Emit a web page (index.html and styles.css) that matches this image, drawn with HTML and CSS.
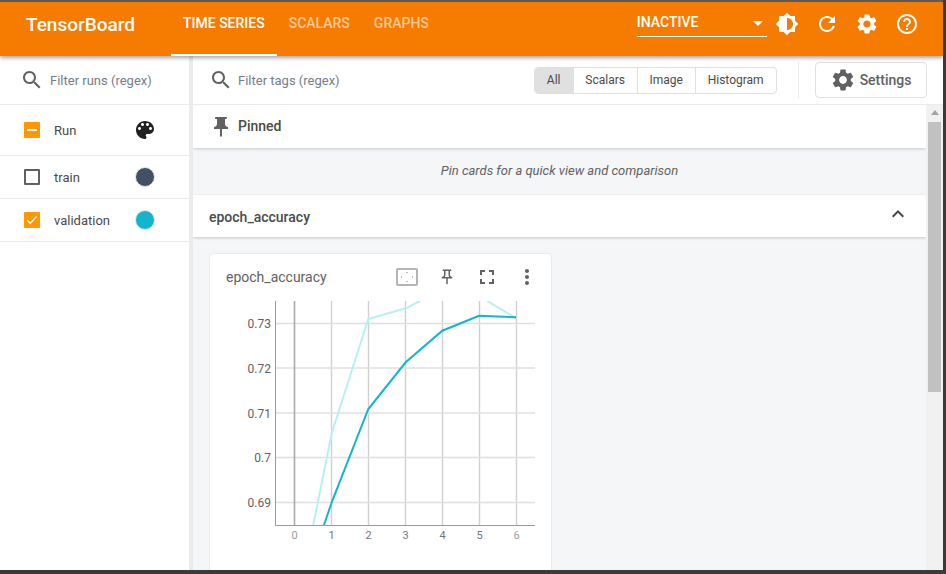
FILE: index.html
```html
<!DOCTYPE html>
<html lang="en">
<head>
<meta charset="UTF-8">
<meta name="viewport" content="width=device-width, initial-scale=1.0">
<title>TensorBoard</title>
<link rel="stylesheet" href="styles.css">
</head>
<body>

<div class="app">
    <header class="topbar">
        <div class="brand">TensorBoard</div>
        <nav class="tabs">
            <a class="tab active">TIME SERIES</a>
            <a class="tab">SCALARS</a>
            <a class="tab">GRAPHS</a>
        </nav>
        <div class="plugin-select">
            <span>INACTIVE</span>
            <i class="caret"></i>
        </div>
        <div class="top-icons">
            <svg viewBox="0 0 24 24"><path d="M20 15.31L23.31 12 20 8.69V4h-4.69L12 .69 8.69 4H4v4.69L.69 12 4 15.31V20h4.69L12 23.31 15.31 20H20v-4.69zM12 18V6c3.31 0 6 2.69 6 6s-2.69 6-6 6z"/></svg>
            <svg viewBox="0 0 24 24"><path d="M17.65 6.35C16.2 4.9 14.21 4 12 4c-4.42 0-7.99 3.58-7.99 8s3.57 8 7.99 8c3.73 0 6.84-2.55 7.73-6h-2.08c-.82 2.33-3.04 4-5.65 4-3.31 0-6-2.69-6-6s2.69-6 6-6c1.66 0 3.14.69 4.22 1.78L13 11h7V4l-2.35 2.35z"/></svg>
            <svg viewBox="0 0 24 24"><path d="M19.14 12.94c.04-.3.06-.61.06-.94 0-.32-.02-.64-.07-.94l2.03-1.58c.18-.14.23-.41.12-.61l-1.92-3.32c-.12-.22-.37-.29-.59-.22l-2.39.96c-.5-.38-1.03-.7-1.62-.94l-.36-2.54c-.04-.24-.24-.41-.48-.41h-3.84c-.24 0-.43.17-.47.41l-.36 2.54c-.59.24-1.13.57-1.62.94l-2.39-.96c-.22-.08-.47 0-.59.22L2.74 8.87c-.12.21-.08.47.12.61l2.03 1.58c-.05.3-.09.63-.09.94s.02.64.07.94l-2.03 1.58c-.18.14-.23.41-.12.61l1.92 3.32c.12.22.37.29.59.22l2.39-.96c.5.38 1.03.7 1.62.94l.36 2.54c.05.24.24.41.48.41h3.84c.24 0 .44-.17.47-.41l.36-2.54c.59-.24 1.13-.56 1.62-.94l2.39.96c.22.08.47 0 .59-.22l1.92-3.32c.12-.22.07-.47-.12-.61l-2.01-1.58zM12 15.6c-1.98 0-3.6-1.62-3.6-3.6s1.62-3.6 3.6-3.6 3.6 1.62 3.6 3.6-1.62 3.6-3.6 3.6z"/></svg>
            <svg viewBox="0 0 24 24"><path d="M11 18h2v-2h-2v2zm1-16C6.48 2 2 6.48 2 12s4.48 10 10 10 10-4.48 10-10S17.52 2 12 2zm0 18c-4.41 0-8-3.59-8-8s3.59-8 8-8 8 3.59 8 8-3.59 8-8 8zm0-14c-2.21 0-4 1.79-4 4h2c0-1.1.9-2 2-2s2 .9 2 2c0 2-3 1.75-3 5h2c0-2.25 3-2.5 3-5 0-2.21-1.79-4-4-4z"/></svg>
        </div>
    </header>

    <div class="workspace">
        <aside class="sidebar">
            <div class="filter-row">
                <svg class="search-icon" viewBox="0 0 24 24"><path d="M15.5 14h-.79l-.28-.27C15.41 12.59 16 11.11 16 9.5 16 5.91 13.09 3 9.5 3S3 5.91 3 9.5 5.91 16 9.5 16c1.61 0 3.09-.59 4.23-1.57l.27.28v.79l5 4.99L20.49 19l-4.99-5zm-6 0C7.01 14 5 11.99 5 9.5S7.01 5 9.5 5 14 7.01 14 9.5 11.99 14 9.5 14z"/></svg>
                <span class="placeholder">Filter runs (regex)</span>
            </div>
            <div class="run-row run-head">
                <span class="check checked"><i class="dash"></i></span>
                <span class="run-name">Run</span>
                <svg class="palette" viewBox="0 0 24 24"><path d="M12 3c-4.97 0-9 4.03-9 9s4.03 9 9 9c.83 0 1.5-.67 1.5-1.5 0-.39-.15-.74-.39-1.01-.23-.26-.38-.61-.38-.99 0-.83.67-1.5 1.5-1.5H16c2.76 0 5-2.24 5-5 0-4.42-4.03-8-9-8zm-5.5 9c-.83 0-1.5-.67-1.5-1.5S5.67 9 6.5 9 8 9.67 8 10.5 7.33 12 6.5 12zm3-4C8.67 8 8 7.33 8 6.5S8.67 5 9.5 5s1.5.67 1.5 1.5S10.33 8 9.5 8zm5 0c-.83 0-1.5-.67-1.5-1.5S13.67 5 14.5 5s1.5.67 1.5 1.5S15.33 8 14.5 8zm3 4c-.83 0-1.5-.67-1.5-1.5S16.67 9 17.5 9s1.5.67 1.5 1.5-.67 1.5-1.5 1.5z"/></svg>
            </div>
            <div class="run-row">
                <span class="check"></span>
                <span class="run-name">train</span>
                <span class="swatch swatch-train"></span>
            </div>
            <div class="run-row">
                <span class="check checked">
                    <svg viewBox="0 0 16 16"><path d="M3.2 8.2l3.2 3 6.2-6.6" fill="none" stroke="#fff" stroke-width="1.4"/></svg>
                </span>
                <span class="run-name">validation</span>
                <span class="swatch swatch-validation"></span>
            </div>
        </aside>

        <main class="main">
            <div class="toolbar">
                <svg class="search-icon" viewBox="0 0 24 24"><path d="M15.5 14h-.79l-.28-.27C15.41 12.59 16 11.11 16 9.5 16 5.91 13.09 3 9.5 3S3 5.91 3 9.5 5.91 16 9.5 16c1.61 0 3.09-.59 4.23-1.57l.27.28v.79l5 4.99L20.49 19l-4.99-5zm-6 0C7.01 14 5 11.99 5 9.5S7.01 5 9.5 5 14 7.01 14 9.5 11.99 14 9.5 14z"/></svg>
                <span class="placeholder">Filter tags (regex)</span>
                <div class="type-filter">
                    <span class="type-btn selected">All</span>
                    <span class="type-btn">Scalars</span>
                    <span class="type-btn">Image</span>
                    <span class="type-btn">Histogram</span>
                </div>
                <div class="toolbar-divider"></div>
                <div class="settings-btn">
                    <svg viewBox="0 0 24 24"><path d="M19.14 12.94c.04-.3.06-.61.06-.94 0-.32-.02-.64-.07-.94l2.03-1.58c.18-.14.23-.41.12-.61l-1.92-3.32c-.12-.22-.37-.29-.59-.22l-2.39.96c-.5-.38-1.03-.7-1.62-.94l-.36-2.54c-.04-.24-.24-.41-.48-.41h-3.84c-.24 0-.43.17-.47.41l-.36 2.54c-.59.24-1.13.57-1.62.94l-2.39-.96c-.22-.08-.47 0-.59.22L2.74 8.87c-.12.21-.08.47.12.61l2.03 1.58c-.05.3-.09.63-.09.94s.02.64.07.94l-2.03 1.58c-.18.14-.23.41-.12.61l1.92 3.32c.12.22.37.29.59.22l2.39-.96c.5.38 1.03.7 1.62.94l.36 2.54c.05.24.24.41.48.41h3.84c.24 0 .44-.17.47-.41l.36-2.54c.59-.24 1.13-.56 1.62-.94l2.39.96c.22.08.47 0 .59-.22l1.92-3.32c.12-.22.07-.47-.12-.61l-2.01-1.58zM12 15.6c-1.98 0-3.6-1.62-3.6-3.6s1.62-3.6 3.6-3.6 3.6 1.62 3.6 3.6-1.62 3.6-3.6 3.6z"/></svg>
                    <span>Settings</span>
                </div>
            </div>

            <div class="main-body">
                <div class="content">
                    <div class="group-head pinned-head">
                        <svg class="pin-solid" viewBox="0 0 24 24"><path d="M16 9V4h1c.55 0 1-.45 1-1s-.45-1-1-1H7c-.55 0-1 .45-1 1s.45 1 1 1h1v5c0 1.66-1.34 3-3 3v2h5.97v7l1 1 1-1v-7H19v-2c-1.66 0-3-1.34-3-3z"/></svg>
                        <span>Pinned</span>
                    </div>
                    <div class="pinned-empty">Pin cards for a quick view and comparison</div>
                    <div class="group-head tag-head">
                        <span>epoch_accuracy</span>
                        <svg class="chevron" viewBox="0 0 24 24"><path d="M12 8l-6 6 1.41 1.41L12 10.83l4.59 4.58L18 14z"/></svg>
                    </div>
                    <div class="card-area">
                        <section class="card">
                            <div class="card-head">
                                <span class="card-title">epoch_accuracy</span>
                                <svg class="fit-icon" viewBox="0 0 22 18">
                                    <rect x="1" y="1" width="20" height="16" rx="1" fill="none" stroke="#b4b4b4" stroke-width="2"/>
                                    <path d="M10 5l1-1 1 1M10 13l1 1 1-1M6 8l-1 1 1 1M16 8l1 1-1 1" fill="none" stroke="#b4b4b4" stroke-width=".9"/>
                                </svg>
                                <svg class="card-icon pin-icon" viewBox="0 0 24 24"><path d="M14 4v5c0 1.12.37 2.16 1 3H9c.65-.86 1-1.9 1-3V4h4m3-2H7c-.55 0-1 .45-1 1s.45 1 1 1h1v5c0 1.66-1.34 3-3 3v2h5.97v7l1 1 1-1v-7H19v-2c-1.66 0-3-1.34-3-3V4h1c.55 0 1-.45 1-1s-.45-1-1-1z"/></svg>
                                <svg class="card-icon" viewBox="0 0 24 24"><path d="M7 14H5v5h5v-2H7v-3zm-2-4h2V7h3V5H5v5zm12 7h-3v2h5v-5h-2v3zM14 5v2h3v3h2V5h-5z"/></svg>
                                <svg class="card-icon" viewBox="0 0 24 24"><path d="M12 8c1.1 0 2-.9 2-2s-.9-2-2-2-2 .9-2 2 .9 2 2 2zm0 2c-1.1 0-2 .9-2 2s.9 2 2 2 2-.9 2-2-.9-2-2-2zm0 6c-1.1 0-2 .9-2 2s.9 2 2 2 2-.9 2-2-.9-2-2-2z"/></svg>
                            </div>
                            <svg class="chart" viewBox="210 301 340 260">
                                <g class="grid-x">
                                    <line x1="331.5" y1="301" x2="331.5" y2="525"/>
                                    <line x1="368.5" y1="301" x2="368.5" y2="525"/>
                                    <line x1="405.5" y1="301" x2="405.5" y2="525"/>
                                    <line x1="442.5" y1="301" x2="442.5" y2="525"/>
                                    <line x1="479.5" y1="301" x2="479.5" y2="525"/>
                                    <line x1="516.5" y1="301" x2="516.5" y2="525"/>
                                </g>
                                <g class="grid-y">
                                    <line x1="275" y1="323.5" x2="535" y2="323.5"/>
                                    <line x1="275" y1="368" x2="535" y2="368"/>
                                    <line x1="275" y1="413" x2="535" y2="413"/>
                                    <line x1="275" y1="457.5" x2="535" y2="457.5"/>
                                    <line x1="275" y1="502.5" x2="535" y2="502.5"/>
                                </g>
                                <line class="zero-line" x1="294.5" y1="301" x2="294.5" y2="525"/>
                                <path class="axis-line" d="M275.5 301V525.5H535"/>
                                <polyline class="series-raw" points="313.3,525 331.7,433.3 368.3,319 405.7,308.3 420,301"/>
                                <polyline class="series-raw" points="487.3,301 516,318.3"/>
                                <polyline class="series-smooth" points="324,525 331.7,502.3 368.3,409 405.7,362.3 442.3,330.7 479,315.7 516,317.3"/>
                                <g class="y-labels">
                                    <text x="271" y="327.5">0.73</text>
                                    <text x="271" y="372.5">0.72</text>
                                    <text x="271" y="417.5">0.71</text>
                                    <text x="271" y="462">0.7</text>
                                    <text x="271" y="506.5">0.69</text>
                                </g>
                                <g class="x-labels">
                                    <text class="faint" x="294.5" y="539">0</text>
                                    <text x="331.5" y="539">1</text>
                                    <text x="368.5" y="539">2</text>
                                    <text x="405.5" y="539">3</text>
                                    <text x="442.5" y="539">4</text>
                                    <text x="479.5" y="539">5</text>
                                    <text class="faint" x="516.5" y="539">6</text>
                                </g>
                            </svg>
                        </section>
                    </div>
                </div>
                <div class="scrollbar">
                    <i class="scroll-up"></i>
                    <div class="scroll-thumb"></div>
                </div>
            </div>
        </main>
    </div>
</div>

</body>
</html>
```

FILE: styles.css
```css
* {
    box-sizing: border-box;
}
html, body {
    margin: 0;
    padding: 0;
    height: 100%;
    overflow: hidden;
}
body {
    font-family: Roboto, "Liberation Sans", sans-serif;
    font-size: 14px;
    color: #4a4a4a;
    background-color: #3a3a3a;
}
.app {
    display: flex;
    flex-direction: column;
    width: 943px;
    height: 570px;
    border-top: 2px solid #5a5a5a;
    background-color: #fff;
    overflow: hidden;
}

/* top bar */
.topbar {
    display: flex;
    flex: none;
    height: 54px;
    color: #fff;
    background-color: #f57c00;
    position: relative;
    z-index: 2;
    box-shadow: 0 2px 4px rgba(0, 0, 0, 0.35);
}
.brand {
    width: 171px;
    padding: 11px 0 0 26px;
    font-size: 19px;
    font-weight: 500;
    line-height: 23px;
}
.tabs {
    display: flex;
}
.tab {
    height: 54px;
    padding: 14px 12px 0;
    font-weight: 500;
    line-height: 15px;
    color: rgba(255, 255, 255, 0.6);
}
.tab.active {
    color: #fff;
    border-bottom: 2px solid #fff;
}
.plugin-select {
    display: flex;
    justify-content: space-between;
    width: 130px;
    height: 35px;
    margin-left: 196px;
    padding-top: 13px;
    font-weight: 500;
    line-height: 15px;
    border-bottom: 1px solid #fff;
}
.caret {
    width: 0;
    height: 0;
    margin: 6px 4px 0 0;
    border-left: 5px solid transparent;
    border-right: 5px solid transparent;
    border-top: 5px solid #fff;
}
.top-icons {
    display: flex;
    gap: 16px;
    margin-left: 8px;
    padding-top: 10px;
}
.top-icons svg {
    width: 24px;
    height: 24px;
    fill: #fff;
}

/* runs sidebar */
.workspace {
    display: flex;
    flex: 1;
    min-height: 0;
}
.sidebar {
    flex: none;
    width: 193px;
    border-right: 4px solid #ebebeb;
}
.filter-row {
    display: flex;
    align-items: center;
    height: 49px;
    padding-left: 20px;
    border-bottom: 1px solid #ebebeb;
}
.search-icon {
    flex: none;
    width: 24px;
    height: 24px;
    fill: #616161;
}
.placeholder {
    margin-left: 6px;
    font-size: 13px;
    color: #757d88;
}
.run-row {
    display: flex;
    align-items: center;
    height: 43px;
    padding-left: 24px;
    border-bottom: 1px solid #ebebeb;
}
.run-head {
    height: 51px;
}
.check {
    display: flex;
    align-items: center;
    justify-content: center;
    flex: none;
    width: 16px;
    height: 16px;
    border: 2px solid #616161;
    border-radius: 1px;
}
.check.checked {
    border: none;
    background-color: #ff9800;
}
.check svg {
    width: 16px;
    height: 16px;
}
.dash {
    width: 10px;
    height: 2px;
    background-color: #fff;
}
.run-name {
    width: 82px;
    margin-left: 14px;
    font-size: 13px;
}
.palette {
    width: 24px;
    height: 24px;
    margin-left: -3px;
    fill: #212121;
}
.swatch {
    width: 20px;
    height: 20px;
    margin-left: -1px;
    border-radius: 50%;
    border: 1px solid #e8e8e8;
}
.swatch-train {
    background-color: #425066;
}
.swatch-validation {
    background-color: #12b5cb;
}

/* main column */
.main {
    display: flex;
    flex-direction: column;
    flex: 1;
    min-width: 0;
}
.toolbar {
    display: flex;
    align-items: center;
    flex: none;
    height: 49px;
    padding-left: 16px;
    border-bottom: 1px solid #ebebeb;
}
.toolbar .placeholder {
    margin-left: 5px;
}
.type-filter {
    display: flex;
    height: 27px;
    margin-left: 194px;
    border: 1px solid #e0e0e0;
    border-radius: 4px;
    overflow: hidden;
    font-size: 12px;
}
.type-btn {
    display: flex;
    align-items: center;
    justify-content: center;
    width: 64px;
    border-left: 1px solid #e0e0e0;
}
.type-btn:nth-child(1) {
    width: 38px;
    border-left: none;
}
.type-btn:nth-child(3) {
    width: 58px;
}
.type-btn:nth-child(4) {
    width: 81px;
}
.type-btn.selected {
    background-color: #e0e0e0;
}
.toolbar-divider {
    width: 1px;
    height: 36px;
    margin-left: 21px;
    background-color: #ebebeb;
}
.settings-btn {
    display: flex;
    align-items: center;
    gap: 4px;
    width: 112px;
    height: 36px;
    margin-left: 16px;
    padding-left: 14px;
    font-size: 14px;
    font-weight: 500;
    color: #616161;
    border: 1px solid #e0e0e0;
    border-radius: 4px;
}
.settings-btn svg {
    width: 26px;
    height: 26px;
    fill: #616161;
}
.main-body {
    display: flex;
    flex: 1;
    min-height: 0;
}
.content {
    flex: 1;
    min-width: 0;
    overflow: hidden;
    background-color: #f5f6f8;
}
.group-head {
    display: flex;
    align-items: center;
    position: relative;
    height: 43px;
    font-weight: 500;
    background-color: #fff;
    box-shadow: 0 1px 3px rgba(0, 0, 0, 0.2);
}
.pinned-head {
    padding: 0 0 2px 16px;
}
.pin-solid {
    width: 24px;
    height: 24px;
    margin: 2px 5px 0 0;
    fill: #616161;
}
.pinned-empty {
    height: 47px;
    padding-top: 15px;
    font-size: 13px;
    font-style: italic;
    line-height: 15px;
    text-align: center;
    color: #616161;
}
.tag-head {
    justify-content: space-between;
    height: 42px;
    padding: 2px 16px 0;
}
.chevron {
    width: 24px;
    height: 24px;
    margin-top: -7px;
    fill: #424242;
}
.card-area {
    padding: 16px;
}
.card {
    width: 343px;
    height: 360px;
    background-color: #fff;
    border: 1px solid #ebebeb;
    border-radius: 4px;
}
.card-head {
    display: flex;
    align-items: center;
    height: 47px;
    padding: 0 12px 2px 16px;
}
.card-title {
    flex: 1;
    font-size: 14px;
    color: #616161;
}
.fit-icon {
    width: 22px;
    height: 18px;
    margin-right: 20px;
}
.card-icon {
    width: 24px;
    height: 24px;
    margin-right: 16px;
    fill: #616161;
}
.pin-icon {
    width: 18px;
    height: 18px;
    margin-right: 19px;
}
.card-icon:last-child {
    margin-right: 0;
}
.chart {
    display: block;
    width: 340px;
    height: 260px;
}
.grid-x line {
    stroke: #d0d0d0;
    stroke-width: 1.4;
}
.grid-y line {
    stroke: #e0e0e0;
    stroke-width: 1.5;
}
.zero-line {
    stroke: #aaa;
    stroke-width: 1.6;
}
.axis-line {
    fill: none;
    stroke: #999;
    stroke-width: 1;
}
.series-raw, .series-smooth {
    fill: none;
    stroke-width: 2;
}
.series-raw {
    stroke: #b7eff5;
}
.series-smooth {
    stroke: #12b5cb;
}
.y-labels text {
    font-size: 12px;
    text-anchor: end;
    fill: #616161;
}
.x-labels text {
    font-size: 11px;
    text-anchor: middle;
    fill: #757575;
}
.x-labels .faint {
    fill: #9e9e9e;
}

/* scrollbar */
.scrollbar {
    flex: none;
    width: 17px;
    padding: 5px 2px 0;
    background-color: #f1f1f1;
}
.scroll-up {
    display: block;
    width: 0;
    height: 0;
    margin: 0 auto 7px;
    border-left: 4px solid transparent;
    border-right: 4px solid transparent;
    border-bottom: 5px solid #a3a3a3;
}
.scroll-thumb {
    height: 270px;
    background-color: #c1c1c1;
}
```
